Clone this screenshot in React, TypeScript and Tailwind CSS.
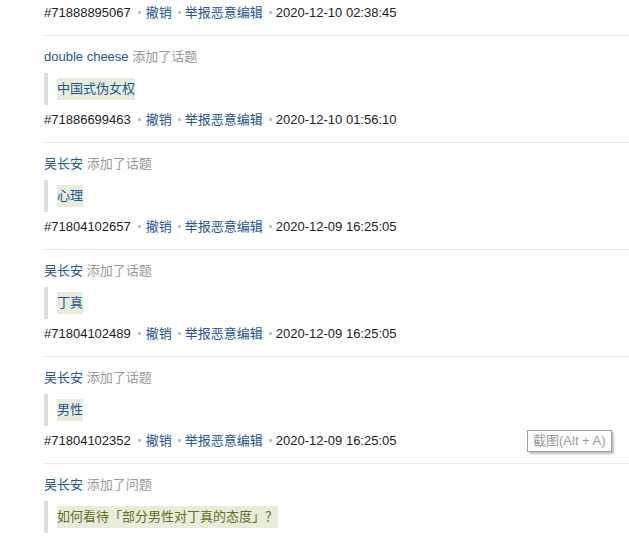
import React from "react";

type Item = {
  author: string;
  action: string;
  content: string;
  isQuestion?: boolean;
  id: string;
  date: string;
};

const items: Item[] = [
  { author: "double cheese", action: "添加了话题", content: "中国式伪女权", id: "#71886699463", date: "2020-12-10 01:56:10" },
  { author: "吴长安", action: "添加了话题", content: "心理", id: "#71804102657", date: "2020-12-09 16:25:05" },
  { author: "吴长安", action: "添加了话题", content: "丁真", id: "#71804102489", date: "2020-12-09 16:25:05" },
  { author: "吴长安", action: "添加了话题", content: "男性", id: "#71804102352", date: "2020-12-09 16:25:05" },
  { author: "吴长安", action: "添加了问题", content: "如何看待「部分男性对丁真的态度」？", isQuestion: true, id: "", date: "" },
];

function Dot({ first }: { first?: boolean }) {
  return (
    <span
      className={
        "inline-block w-[3px] h-[3px] bg-[#c4c4c4] align-middle relative top-[-1px] " +
        (first ? "ml-[7px] mr-[5px]" : "ml-[6px] mr-[4px]")
      }
    />
  );
}

function Meta({ id, date }: { id: string; date: string }) {
  return (
    <div className="leading-[20px] whitespace-nowrap text-[#222]">
      <span>{id}</span>
      <Dot first />
      <a className="text-[#259]">撤销</a>
      <Dot />
      <a className="text-[#259]">举报恶意编辑</a>
      <Dot />
      <span>{date}</span>
    </div>
  );
}

export default function App() {
  return (
    <div
      className="relative w-[629px] h-[537px] overflow-hidden bg-white text-[13px]"
      style={{ fontFamily: '"Liberation Sans", Arial, "Noto Sans CJK SC", sans-serif' }}
    >
      <div className="pl-[44px]">
        <div className="pt-[3px] pb-[12px] border-b border-[#e6e6e6]">
          <Meta id="#71888895067" date="2020-12-10 02:38:45" />
        </div>
        {items.map((it, i) => (
          <div key={i} className="pt-[11px] pb-[12px] border-b border-[#e6e6e6]">
            <div className="leading-[20px]">
              <a className="text-[#259]">{it.author}</a>{" "}
              <span className="text-[#999]">{it.action}</span>
            </div>
            <div className="mt-[6px] border-l-4 border-[#dddddd] pl-[9px] py-[5px]">
              <span
                className={
                  "inline-block leading-[22px] bg-[#e8eddb] " +
                  (it.isQuestion ? "text-[#6a6c1e]" : "text-[#259]")
                }
              >
                {it.content}
              </span>
            </div>
            {it.id && (
              <div className="mt-[5px]">
                <Meta id={it.id} date={it.date} />
              </div>
            )}
          </div>
        ))}
      </div>
      <div className="absolute left-[527px] top-[430px] w-[85px] h-[22px] border border-[#a0a0a0] bg-white text-[#9a9a9a] text-[13px] leading-[20px] pl-[5px] shadow-[2px_2px_2px_rgba(0,0,0,0.25)] whitespace-nowrap">
        截图(Alt + A)
      </div>
    </div>
  );
}
